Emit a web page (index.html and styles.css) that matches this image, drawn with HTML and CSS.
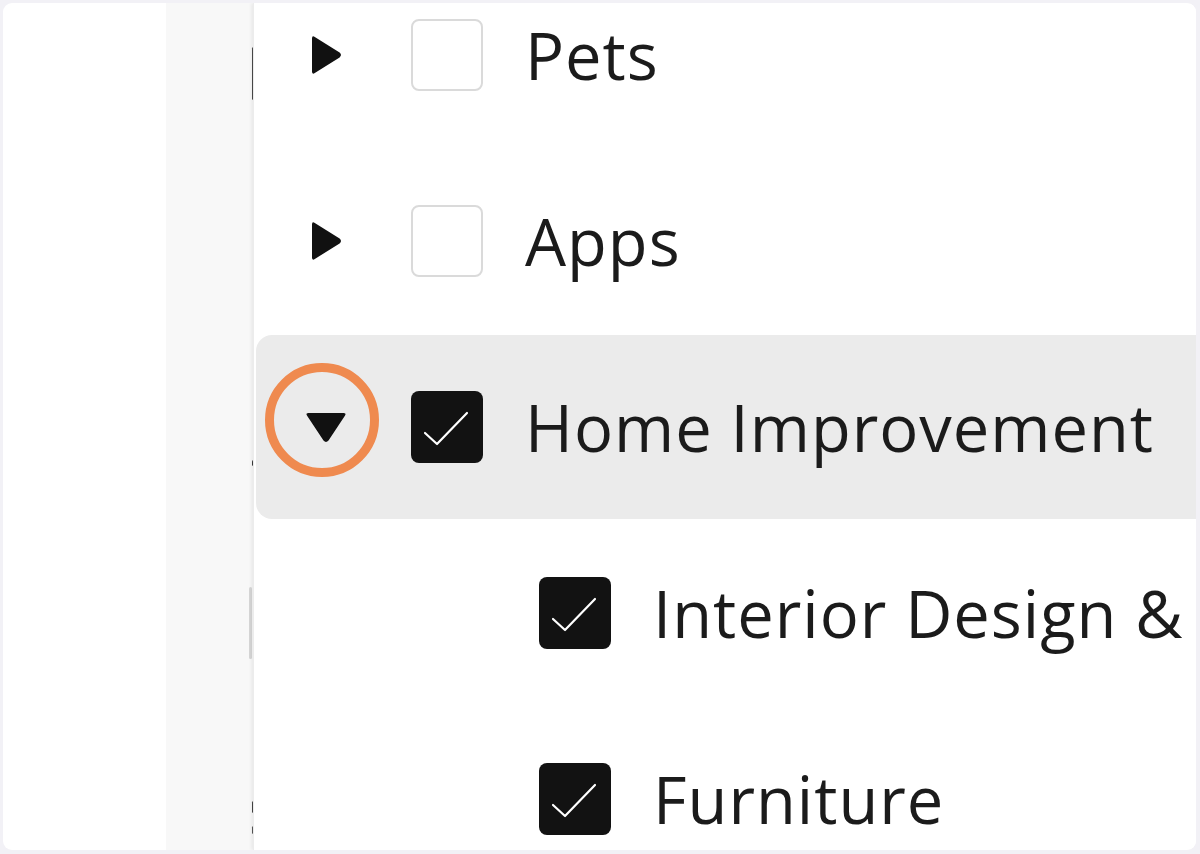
FILE: index.html
```html
<!DOCTYPE html>
<html lang="en">
<head>
  <meta charset="UTF-8">
  <meta name="viewport" content="width=device-width, initial-scale=1.0">
  <title>Categories</title>
  <link rel="stylesheet" href="styles.css">
</head>
<body>
  <div class="frame">
    <div class="side"></div>
    <div class="strip">
      <span class="peek peek-bar"></span>
      <span class="peek peek-dot"></span>
      <span class="peek peek-field"></span>
      <span class="peek peek-dot-a"></span>
      <span class="peek peek-dot-b"></span>
    </div>
    <div class="panel">
      <ul class="tree">
        <li class="row">
          <span class="toggle">
            <svg viewBox="0 0 44 44" width="44" height="44"><path d="M8 5.5 Q8 2.2 10.8 4 L35.6 19.6 Q38.4 22 35.6 24.4 L10.8 40 Q8 41.8 8 38.5 Z" /></svg>
          </span>
          <span class="box"></span>
          <span class="label">Pets</span>
        </li>
        <li class="row">
          <span class="toggle">
            <svg viewBox="0 0 44 44" width="44" height="44"><path d="M8 5.5 Q8 2.2 10.8 4 L35.6 19.6 Q38.4 22 35.6 24.4 L10.8 40 Q8 41.8 8 38.5 Z" /></svg>
          </span>
          <span class="box"></span>
          <span class="label">Apps</span>
        </li>
        <li class="row open">
          <span class="toggle">
            <svg class="down" viewBox="0 0 44 44" width="44" height="44"><path d="M8 5.5 Q8 2.2 10.8 4 L35.6 19.6 Q38.4 22 35.6 24.4 L10.8 40 Q8 41.8 8 38.5 Z" /></svg>
            <span class="ring"></span>
          </span>
          <span class="box checked">
            <svg viewBox="0 0 72 72" width="72" height="72"><path d="M14 42 L26 53 L56 22" /></svg>
          </span>
          <span class="label">Home Improvement</span>
        </li>
        <li class="row child">
          <span class="box checked">
            <svg viewBox="0 0 72 72" width="72" height="72"><path d="M14 42 L26 53 L56 22" /></svg>
          </span>
          <span class="label">Interior Design &amp;</span>
        </li>
        <li class="row child">
          <span class="box checked">
            <svg viewBox="0 0 72 72" width="72" height="72"><path d="M14 42 L26 53 L56 22" /></svg>
          </span>
          <span class="label">Furniture</span>
        </li>
      </ul>
    </div>
  </div>
</body>
</html>
```

FILE: styles.css
```css
* {
  margin: 0;
  padding: 0;
  box-sizing: border-box;
}

body {
  background-color: #f2f1f6;
  padding: 3px 4px 4px 3px;
  height: 100vh;
  overflow: hidden;
  font-family: "Open Sans", Lato, sans-serif;
  color: #1b1b1b;
}

.frame {
  display: flex;
  height: 100%;
  background-color: #ffffff;
  border-radius: 9px;
  overflow: hidden;
}

.side {
  width: 163px;
  flex-shrink: 0;
}

/* 下に隠れているページの端 */
.strip {
  width: 87px;
  flex-shrink: 0;
  background-color: #f8f8f8;
  display: flex;
  flex-direction: column;
  align-items: flex-end;
}

.peek {
  display: block;
  width: 3px;
  margin-right: -2px;
  border-radius: 2px;
}

.peek-bar { margin-top: 44px; height: 53px; background-color: #4a4a4a; }
.peek-dot { margin-top: 360px; height: 6px; background-color: #3a3a3a; }
.peek-field { margin-top: 121px; height: 72px; width: 3px; background-color: #d6d6d6; margin-right: 1px; }
.peek-dot-a { margin-top: 142px; height: 12px; background-color: #444; }
.peek-dot-b { margin-top: 13px; height: 8px; background-color: #555; }

.panel {
  flex: 1;
  min-width: 0;
  overflow: hidden;
  background-color: #ffffff;
  box-shadow: -2px 0 3px rgba(0, 0, 0, 0.06);
  border-left: 1px solid #ececec;
}

.tree {
  list-style: none;
  margin-top: -40px;
  display: flex;
  flex-direction: column;
  gap: 2px;
}

.row {
  height: 184px;
  display: flex;
  align-items: center;
  padding-left: 42px;
}

.row.open {
  background-color: #ebebeb;
  margin-left: 2px;
  padding-left: 40px;
  border-radius: 16px 0 0 16px;
}

.row.child {
  padding-left: 285px;
}

.toggle {
  position: relative;
  width: 60px;
  height: 60px;
  flex-shrink: 0;
  margin-right: 55px;
  display: flex;
  justify-content: center;
  align-items: center;
}

.toggle svg {
  fill: #111111;
}

.toggle svg.down {
  transform: rotate(90deg) scaleY(1.05);
}

/* 強調の丸 */
.ring {
  position: absolute;
  left: -31px;
  top: -34px;
  width: 114px;
  height: 114px;
  border: 9px solid #ef8a4f;
  border-radius: 50%;
}

.box {
  width: 72px;
  height: 72px;
  flex-shrink: 0;
  border: 2px solid #dadada;
  border-radius: 8px;
  background-color: #ffffff;
  margin-right: 42px;
}

.box.checked {
  border: none;
  background-color: #121212;
}

.box svg {
  display: block;
  fill: none;
  stroke: #ffffff;
  stroke-width: 2.2;
  stroke-linecap: round;
  stroke-linejoin: round;
}

.label {
  font-size: 65px;
  line-height: 1.2;
  white-space: nowrap;
  letter-spacing: 1px;
}
```
